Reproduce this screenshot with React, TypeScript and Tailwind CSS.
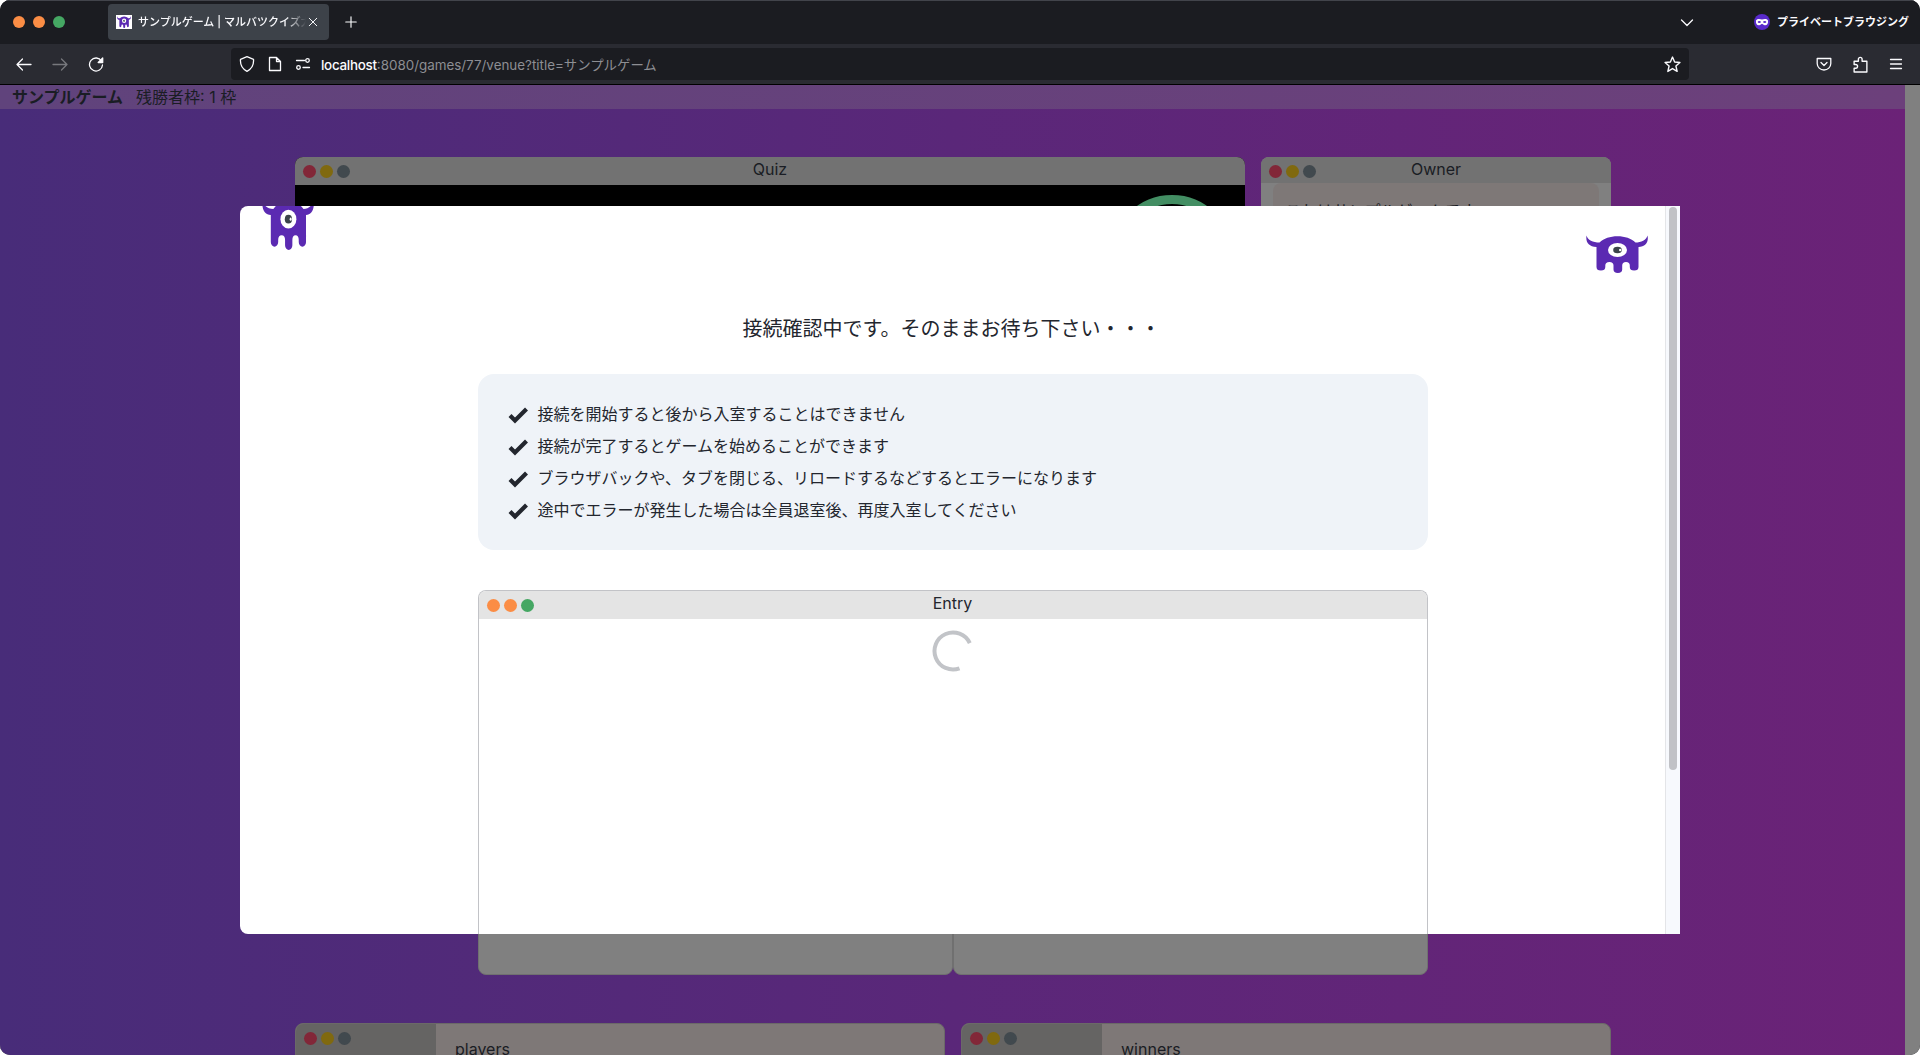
import type { ReactNode } from 'react';

const CJK = "font-['Inter','Noto_Sans_CJK_JP',sans-serif]";

function Monster({ className }: { className: string }) {
  return (
    <svg className={className} viewBox="0 0 62 38" preserveAspectRatio="none">
      <path
        fill="#5b2ab2"
        d="M.5 .5C1.500 5 7 7.500 13.500 7.500C18 3.500 24 1.300 31.500 1.300S45 3.500 49.500 7.500C55 7.500 60.500 5 61.500 .5C63 7 59.500 11.800 52.500 12V32a4.350 3.500 0 0 1-8.700 0V30.500a3.800 3.500 0 0 0-7.600 0V34.500a4.350 3.500 0 0 1-8.700 0V30.500a4.100 3.500 0 0 0-8.200 0V32a4.400 3.500 0 0 1-8.800 0V12C2.500 11.800-.5 7 .5 .5Z"
      />
      <ellipse cx="31.500" cy="15" rx="9.500" ry="7" fill="#fff" />
      <ellipse cx="31.500" cy="15" rx="4.300" ry="3.200" fill="#3b444a" />
      <circle cx="34.200" cy="15" r="1.200" fill="#fff" />
    </svg>
  );
}

function Dots({ dim = false }: { dim?: boolean }) {
  return (
    <div className="flex gap-1">
      <i className={`size-[13px] rounded-full ${dim ? 'bg-[#822738]' : 'bg-[#fb8d45]'}`} />
      <i className={`size-[13px] rounded-full ${dim ? 'bg-[#80690f]' : 'bg-[#fb8d45]'}`} />
      <i className={`size-[13px] rounded-full ${dim ? 'bg-[#41494e]' : 'bg-[#45a763]'}`} />
    </div>
  );
}

function Icon({ children, className = 'size-4' }: { children: ReactNode; className?: string }) {
  return (
    <svg
      className={`shrink-0 ${className}`}
      viewBox="0 0 16 16"
      fill="none"
      stroke="currentColor"
      strokeWidth="1.300"
      strokeLinecap="round"
      strokeLinejoin="round"
    >
      {children}
    </svg>
  );
}

function TabStrip() {
  return (
    <div className="flex h-11 shrink-0 items-center border-t border-[#42444b] bg-[#1b1c21] pb-px text-[#fbfbfe]">
      <div className="ml-[13px] flex gap-2">
        <i className="size-3 rounded-full bg-[#fb8d45]" />
        <i className="size-3 rounded-full bg-[#fb8d45]" />
        <i className="size-3 rounded-full bg-[#45a763]" />
      </div>
      <div className="ml-[43px] flex h-9 w-[221px] items-center rounded bg-[#3d4249] pl-2">
        <div className="flex h-3.5 w-4 items-center justify-center bg-white">
          <Monster className="h-3 w-3.5" />
        </div>
        <div className="ml-1.5 w-[168px] overflow-hidden whitespace-nowrap text-[11px] font-medium [mask-image:linear-gradient(to_right,black_88%,transparent)]">
          サンプルゲーム | マルバツクイズ大
        </div>
        <Icon className="ml-[1px] size-3"><path d="M3 3l10 10M13 3L3 13" /></Icon>
      </div>
      <Icon className="ml-[15px] size-3.5"><path d="M8 2v12M2 8h12" /></Icon>
      <Icon className="ml-auto size-4"><path d="M2.500 6L8 11.500 13.500 6" /></Icon>
      <svg className="ml-[59px] size-4" viewBox="0 0 16 16">
        <circle cx="8" cy="8" r="8" fill="#592acb" />
        <path fill="#fff" d="M2 6.500C3.500 4.300 6 5 8 5.500 10 5 12.500 4.300 14 6.500 14.500 10 12.500 12 10 11L8 9.800 6 11C3.500 12 1.500 10 2 6.500Z" />
        <ellipse cx="5.300" cy="8" rx="1.600" ry="1" fill="#592acb" />
        <ellipse cx="10.700" cy="8" rx="1.600" ry="1" fill="#592acb" />
      </svg>
      <span className="ml-[7px] mr-[11px] w-[132px] whitespace-nowrap text-[11px] font-bold">プライベートブラウジング</span>
    </div>
  );
}

function Toolbar() {
  return (
    <div className="flex h-10 shrink-0 items-center bg-[#2a2b32] text-[#fbfbfe]">
      <Icon className="ml-4 size-4"><path d="M1 8.500h14M6.500 3L1 8.500 6.500 14" /></Icon>
      <Icon className="ml-5 size-4 text-[#77787d]"><path d="M1 8.500h14M9.500 3L15 8.500 9.500 14" /></Icon>
      <Icon className="ml-5 size-4">
        <path d="M13.500 5A6.500 6.500 0 1 0 14.500 9" />
        <path fill="currentColor" d="M14.700 2v4.500h-4.500Z" />
      </Icon>
      <div className="ml-[127px] flex h-8 w-[1458px] items-center rounded bg-[#1b1c21] pl-2 pr-2">
        <Icon className="size-4"><path d="M8 .7L14.500 3.300C15 9 12.500 13 8 15.300 3.500 13 1 9 1.500 3.300Z" /></Icon>
        <Icon className="ml-3 size-4"><path d="M2.500 1.500h7l4 4v9h-11ZM9.500 1.500v4h4" /></Icon>
        <Icon className="ml-3 size-4">
          <path d="M1.500 4.500h8M8 11.500h6.500" />
          <circle cx="12.500" cy="4.500" r="1.800" />
          <circle cx="3.500" cy="11.500" r="1.800" />
        </Icon>
        <div className="ml-2.5 whitespace-nowrap pt-0.5 text-[13.400px] text-[#8d8e93]">
          <span className="font-medium tracking-[-0.020em] text-[#fbfbfe]">localhost</span>:8080/games/77/venue?title=サンプルゲーム
        </div>
        <Icon className="ml-auto size-[17px]">
          <path d="M8 1l2 4.700 5 .4-3.800 3.300L12.400 14.500 8 11.800 3.600 14.500l1.200-5.100L1 6.100l5-.4Z" />
        </Icon>
      </div>
      <Icon className="ml-[127px] size-4">
        <path d="M1.200 2.500h13.600v5a6.800 6.500 0 0 1-13.600 0ZM5 6.500l3 3 3-3" />
      </Icon>
      <Icon className="ml-5 size-[17px]">
        <path d="M2 15V11.500H3.500a1.700 1.700 0 0 0 0-3.500H2V5h4V3a1.700 1.700 0 0 1 3.500 0v2h4.500v10Z" />
      </Icon>
      <Icon className="ml-[19px] size-4"><path d="M2.500 3.500h11M2.500 8h11M2.500 12.500h11" /></Icon>
    </div>
  );
}

function ListCard({ label }: { label: string }) {
  return (
    <div className="flex h-60 w-[650px] overflow-hidden rounded-lg border border-[#6b6968] bg-[#7e7877]">
      <div className="w-[140px] bg-[#656463] pl-2 pt-2">
        <Dots dim />
      </div>
      <div className="pl-[19px] pt-[13px] text-base text-[#1a1d24]">{label}</div>
    </div>
  );
}

const NOTES = [
  '接続を開始すると後から入室することはできません',
  '接続が完了するとゲームを始めることができます',
  'ブラウザバックや、タブを閉じる、リロードするなどするとエラーになります',
  '途中でエラーが発生した場合は全員退室後、再度入室してください',
];

function WaitingDialog() {
  return (
    <div className="absolute left-[240px] top-[206px] flex h-[728px] w-[1440px] overflow-hidden rounded-l-lg bg-white text-[#23262e]">
      <div className="flex w-[1425px] shrink-0 flex-col items-center">
        <div className="flex h-[104px] w-full items-start justify-between pl-[22px] pr-[17px]">
          <Monster className="-mt-[7px] h-[51px] w-[52px]" />
          <Monster className="mt-[29px] h-[38px] w-[62px]" />
        </div>
        <h1 className="-ml-0.5 h-[64px] whitespace-nowrap pt-[3px] text-[20px] leading-8">接続確認中です。そのままお待ち下さい・・・</h1>
        <ul className="flex h-[176px] w-[950px] flex-col rounded-2xl bg-[#eff3f8] px-[30px] pt-6">
          {NOTES.map((note) => (
            <li key={note} className="flex h-8 items-center gap-2.5 whitespace-nowrap text-base">
              <svg className="mt-0.5 size-5" viewBox="0 0 20 20">
                <path d="M2 10.500L7 15.500 18.500 4" fill="none" stroke="#23262e" strokeWidth="4.200" />
              </svg>
              {note}
            </li>
          ))}
        </ul>
        <div className="mt-10 h-[344px] w-[950px] shrink-0 overflow-hidden rounded-t-lg border border-b-0 border-[#c2c3c7]">
          <div className="grid h-7 grid-cols-3 bg-[#e4e4e4] pl-2">
            <div className="pt-2"><Dots /></div>
            <div className="-ml-2 text-center text-base leading-6">Entry</div>
          </div>
          <svg className="mx-auto mt-[11px] size-[42px]" viewBox="-21 -21 42 42">
            <path d="M16.800-7.800A18.500 18.500 0 1 0 6.500 17.300" fill="none" stroke="#c2c4c8" strokeWidth="4" />
          </svg>
        </div>
      </div>
      <div className="w-[15px] shrink-0 border-l border-[#e4e5e8] bg-[#f7f9fd] pl-[3px] pt-px">
        <div className="h-[563px] w-2 rounded-full bg-[#c1c2c6]" />
      </div>
    </div>
  );
}

export default function App() {
  return (
    <div className="h-[1055px] w-[1920px] overflow-hidden bg-white">
      <div className={`relative flex h-full flex-col overflow-hidden rounded-[10px] bg-[#1b1c21] ${CJK}`}>
        <TabStrip />
        <Toolbar />
        <div className="flex h-[971px] shrink-0 border-t border-black bg-[#808080]">
          <main className="w-[1905px] bg-linear-to-r from-[#482c79] via-[#5a2779] to-[#6b2277]">
            <div className="flex h-6 items-center gap-[13px] bg-linear-to-r from-[#60437c] to-[#6c407b] pl-3 text-base text-[#1a1d24]">
              <b>サンプルゲーム</b>
              <span>残勝者枠: 1 枠</span>
            </div>
            <div className="ml-[295px] mt-12 flex w-[1316px] flex-col items-center">
              <div className="flex w-full justify-between text-base leading-6 text-[#1a1d24]">
                <section className="h-[420px] w-[950px] overflow-hidden rounded-t-lg bg-black">
                  <div className="grid h-7 grid-cols-3 bg-[#727272] pl-2">
                    <div className="pt-2"><Dots dim /></div>
                    <div className="-ml-2 text-center">Quiz</div>
                  </div>
                  <div className="ml-[816px] mt-2.5 size-[122px] rounded-full border-[9px] border-[#438e63]" />
                </section>
                <section className="h-[420px] w-[350px] overflow-hidden rounded-t-lg bg-[#808080]">
                  <div className="grid h-[26px] grid-cols-3 bg-[#727272] pl-2">
                    <div className="pt-2"><Dots dim /></div>
                    <div className="-ml-2 text-center">Owner</div>
                  </div>
                  <div className="mx-3 h-40 rounded-lg bg-[#7e7877] px-3 pt-4">これはサンプルゲームです</div>
                </section>
              </div>
              <div className="mt-10 flex h-[358px]">
                <div className="w-[475px] rounded-lg border border-[#707070] bg-[#808080]" />
                <div className="w-[475px] rounded-lg border border-[#707070] bg-[#808080]" />
              </div>
              <div className="mt-12 flex w-full justify-between">
                <ListCard label="players" />
                <ListCard label="winners" />
              </div>
            </div>
          </main>
        </div>
        <WaitingDialog />
      </div>
    </div>
  );
}
